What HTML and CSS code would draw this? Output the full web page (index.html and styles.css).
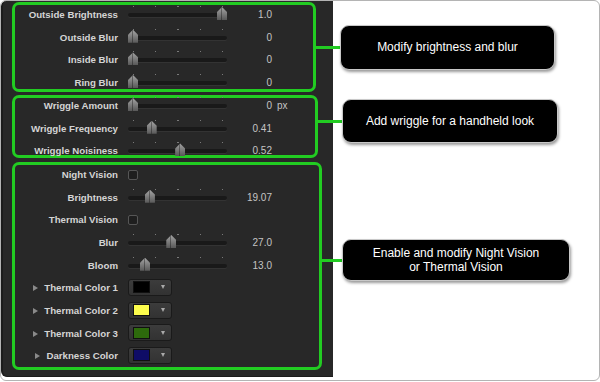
FILE: index.html
```html
<!DOCTYPE html>
<html lang="en">
<head>
  <meta charset="utf-8"/>
  <title>Night Vision settings</title>
  <link rel="stylesheet" href="styles.css">
</head>
<body>
  <div class="frame">
    <div class="panel">

      <div class="section">
        <div class="group group-light">
          <div class="row"><span class="label">Outside Brightness</span><span class="slider"><i class="thumb" style="--v:100"></i></span><span class="value">1.0</span></div>
          <div class="row"><span class="label">Outside Blur</span><span class="slider"><i class="thumb" style="--v:0"></i></span><span class="value">0</span></div>
          <div class="row"><span class="label">Inside Blur</span><span class="slider"><i class="thumb" style="--v:0"></i></span><span class="value">0</span></div>
          <div class="row"><span class="label">Ring Blur</span><span class="slider"><i class="thumb" style="--v:0"></i></span><span class="value">0</span></div>
        </div>
        <div class="tag">
          <span class="link link-light"></span>
          <div class="note note-light">Modify brightness and blur</div>
        </div>
      </div>

      <div class="section">
        <div class="group group-wriggle">
          <div class="row"><span class="label">Wriggle Amount</span><span class="slider"><i class="thumb" style="--v:0"></i></span><span class="value">0</span><span class="unit">px</span></div>
          <div class="row"><span class="label">Wriggle Frequency</span><span class="slider"><i class="thumb" style="--v:21"></i></span><span class="value">0.41</span></div>
          <div class="row"><span class="label">Wriggle Noisiness</span><span class="slider"><i class="thumb" style="--v:53"></i></span><span class="value">0.52</span></div>
        </div>
        <div class="tag tag-up">
          <span class="link link-wriggle"></span>
          <div class="note note-wriggle">Add wriggle for a handheld look</div>
        </div>
      </div>

      <div class="section">
        <div class="group group-vision">
          <div class="row"><span class="label">Night Vision</span><span class="check"></span></div>
          <div class="row"><span class="label">Brightness</span><span class="slider"><i class="thumb" style="--v:19"></i></span><span class="value">19.07</span></div>
          <div class="row"><span class="label">Thermal Vision</span><span class="check"></span></div>
          <div class="row"><span class="label">Blur</span><span class="slider"><i class="thumb" style="--v:43"></i></span><span class="value">27.0</span></div>
          <div class="row"><span class="label">Bloom</span><span class="slider"><i class="thumb" style="--v:13.5"></i></span><span class="value">13.0</span></div>
          <div class="row"><span class="label"><i class="twisty"></i>Thermal Color 1</span><span class="well"><i class="swatch" style="background:#000"></i><i class="drop"></i></span></div>
          <div class="row"><span class="label"><i class="twisty"></i>Thermal Color 2</span><span class="well"><i class="swatch" style="background:#fcfc4c"></i><i class="drop"></i></span></div>
          <div class="row"><span class="label"><i class="twisty"></i>Thermal Color 3</span><span class="well"><i class="swatch" style="background:#2d6a0c"></i><i class="drop"></i></span></div>
          <div class="row"><span class="label"><i class="twisty"></i>Darkness Color</span><span class="well"><i class="swatch" style="background:#0f0c66"></i><i class="drop"></i></span></div>
        </div>
        <div class="tag tag-up">
          <span class="link link-vision"></span>
          <div class="note note-vision">Enable and modify Night Vision<br>or Thermal Vision</div>
        </div>
      </div>

    </div>
  </div>
</body>
</html>
```

FILE: styles.css
```css
* {
  box-sizing: border-box;
}
body {
  margin: 0;
  background: #fff;
  font-family: "Liberation Sans", Arial, sans-serif;
}
.frame {
  width: 600px;
  height: 381px;
  border: 1px solid #b4b4b4;
  border-radius: 6px;
  background: #fff;
  display: flex;
  overflow: hidden;
}
.panel {
  width: 332px;
  height: 376px;
  flex: none;
  background: #282828;
  border-left: 2px solid #1c1c1c;
  border-bottom: 1px solid #1c1c1c;
  border-radius: 5px 0 0 6px;
  padding: 1px 0 0 9px;
}

/* green groups + callouts */
.section {
  display: flex;
  align-items: center;
  width: max-content;
}
.group {
  border: 3px solid #22cc22;
  border-radius: 7px;
  display: flex;
  flex-direction: column;
  gap: 14.7px;
}
.group-light {
  width: 304px;
  padding: 6px 0 2px;
}
.group-wriggle {
  width: 306px;
  padding: 4px 0 0;
  margin-top: 3px;
}
.group-vision {
  width: 310px;
  padding: 6px 0 6.4px;
  margin-top: 3.5px;
}
.tag {
  display: flex;
  align-items: center;
}
.tag-up {
  margin-bottom: 8px;
}
.link {
  height: 3px;
  background: #22cc22;
  flex: none;
}
.link-light { width: 24px; }
.link-wriggle { width: 24px; }
.link-vision { width: 20px; }
.note {
  background: #000;
  color: #fff;
  border: 1px solid #c8c8c8;
  border-radius: 9px;
  box-shadow: 1px 2px 3px rgba(0, 0, 0, 0.4);
  font-size: 12px;
  line-height: 14px;
  display: flex;
  align-items: center;
  justify-content: center;
  text-align: center;
}
.note-light { width: 215px; height: 45px; }
.note-wriggle { width: 216px; height: 44px; }
.note-vision { width: 228px; height: 42px; }

/* inspector rows */
.row {
  display: flex;
  align-items: center;
  height: 8px;
}
.label {
  width: 103px;
  flex: none;
  text-align: right;
  font-size: 9.7px;
  font-weight: bold;
  line-height: 12px;
  color: #d4d4d4;
  white-space: nowrap;
}
.slider {
  position: relative;
  width: 99px;
  height: 12px;
  margin-left: 10px;
  flex: none;
}
.slider::before {
  content: "";
  position: absolute;
  left: 5px;
  width: 90px;
  top: -3px;
  height: 1px;
  background: repeating-linear-gradient(90deg, #7a7a7a 0 1px, transparent 1px 22.25px);
}
.slider::after {
  content: "";
  position: absolute;
  left: 0;
  right: 0;
  top: 4px;
  height: 4px;
  border-radius: 2px;
  background: #191919;
  box-shadow: 0 1px 0 #333;
}
.thumb {
  position: absolute;
  z-index: 1;
  top: -2px;
  left: calc(var(--v) * 0.89px);
  width: 10px;
  height: 13px;
  clip-path: polygon(50% 0, 100% 38%, 100% 100%, 0 100%, 0 38%);
  background:
    linear-gradient(90deg, transparent 4px, rgba(0, 0, 0, 0.35) 4px 5px, transparent 5px),
    linear-gradient(#a4a4a4, #585858);
}
.value {
  width: 45px;
  flex: none;
  text-align: right;
  font-size: 10px;
  line-height: 12px;
  color: #c4c4c4;
}
.unit {
  margin-left: 5px;
  font-size: 10px;
  line-height: 12px;
  color: #c4c4c4;
}
.check {
  width: 10px;
  height: 10px;
  flex: none;
  margin-left: 10px;
  border: 1px solid #565656;
  border-radius: 2px;
  background: #1f1f1f;
}
.twisty {
  display: inline-block;
  vertical-align: 0;
  margin-right: 6px;
  border-left: 5px solid #8a8a8a;
  border-top: 3.5px solid transparent;
  border-bottom: 3.5px solid transparent;
}
.well {
  display: flex;
  flex: none;
  align-items: center;
  width: 44px;
  height: 17px;
  margin: 0 0 2px 10px;
  padding-left: 4px;
  border: 1px solid #1a1a1a;
  border-radius: 3px;
  background: linear-gradient(#3c3c3c, #323232);
}
.swatch {
  width: 17px;
  height: 12px;
  border: 1px solid #101010;
}
.drop {
  margin-left: 11px;
  border-top: 4px solid #aaa;
  border-left: 2.5px solid transparent;
  border-right: 2.5px solid transparent;
}
```
